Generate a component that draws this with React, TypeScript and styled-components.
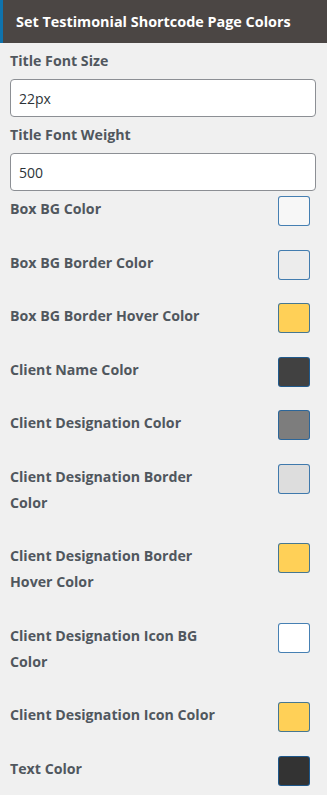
import styled, { createGlobalStyle } from "styled-components";

const GlobalStyle = createGlobalStyle`
  html, body {
    margin: 0;
    padding: 0;
    background: #f0f0f0;
  }
  body {
    font-family: "Open Sans", "Noto Sans", "Liberation Sans", sans-serif;
  }
`;

const Panel = styled.div`
  width: 327px;
  min-height: 795px;
  background: #f0f0f0;
`;

const Header = styled.div`
  height: 43px;
  display: flex;
  align-items: center;
  background: #4b4644;
  border-left: 3px solid #0f73ad;
  padding-left: 13px;
  color: #ffffff;
  font-size: 14.4px;
  font-weight: 700;
`;

const Body = styled.div`
  display: flex;
  flex-direction: column;
  padding: 5px 11px 0 10px;
`;

const Label = styled.div`
  font-size: 14.2px;
  font-weight: 700;
  line-height: 26px;
  color: #50575e;
`;

const TextInput = styled.input`
  box-sizing: border-box;
  width: 100%;
  height: 38px;
  margin: 5px 0;
  padding: 0 8px;
  border: 1px solid #8c8f94;
  border-radius: 4px;
  background: #ffffff;
  color: #2c3338;
  font-family: inherit;
  font-size: 14px;
  outline: none;
`;

const ColorRow = styled.div`
  display: flex;
  justify-content: space-between;
  align-items: flex-start;
`;

const ColorLabel = styled(Label)`
  width: 215px;
  padding-bottom: 27.5px;
`;

const Swatch = styled.div<{ $color: string }>`
  box-sizing: border-box;
  width: 32px;
  height: 30px;
  margin-right: 6px;
  border: 1px solid rgba(24, 96, 160, 0.8);
  border-radius: 3px;
  background: ${(p) => p.$color};
`;

const colors = [
  { label: "Box BG Color", color: "#f7f7f7" },
  { label: "Box BG Border Color", color: "#ececec" },
  { label: "Box BG Border Hover Color", color: "#ffd057" },
  { label: "Client Name Color", color: "#414141" },
  { label: "Client Designation Color", color: "#7d7d7d" },
  { label: "Client Designation Border Color", color: "#dddddd" },
  { label: "Client Designation Border Hover Color", color: "#ffd057" },
  { label: "Client Designation Icon BG Color", color: "#ffffff" },
  { label: "Client Designation Icon Color", color: "#ffd057" },
  { label: "Text Color", color: "#333333" },
];

const App = () => {
  return (
    <Panel>
      <GlobalStyle />
      <Header>Set Testimonial Shortcode Page Colors</Header>
      <Body>
        <Label>Title Font Size</Label>
        <TextInput defaultValue="22px" />
        <Label>Title Font Weight</Label>
        <TextInput defaultValue="500" />
        {colors.map((c) => (
          <ColorRow key={c.label}>
            <ColorLabel>{c.label}</ColorLabel>
            <Swatch $color={c.color} />
          </ColorRow>
        ))}
      </Body>
    </Panel>
  );
};

export default App;
